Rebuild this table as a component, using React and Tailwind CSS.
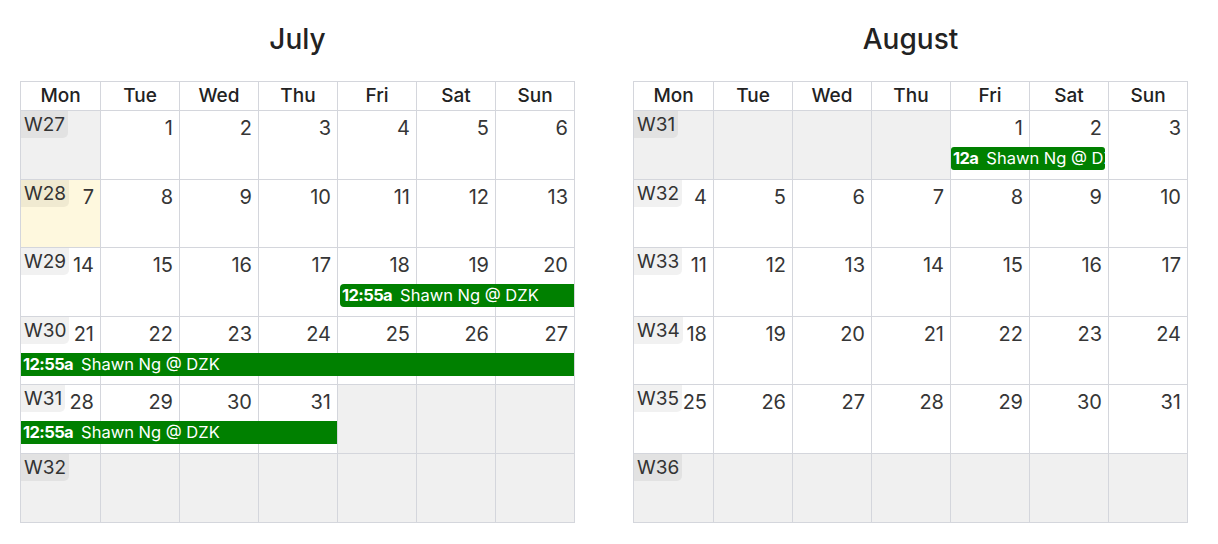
import React from "react";

const DAYS = ["Mon", "Tue", "Wed", "Thu", "Fri", "Sat", "Sun"];

const july = {
  title: "July",
  weeks: [
    { w: "W27", days: [null, 1, 2, 3, 4, 5, 6] },
    { w: "W28", days: [7, 8, 9, 10, 11, 12, 13], today: 0 },
    { w: "W29", days: [14, 15, 16, 17, 18, 19, 20], event: { start: 5, span: 3, time: "12:55a", cls: "rounded-l-[4px] ml-[3px]" } },
    { w: "W30", days: [21, 22, 23, 24, 25, 26, 27], event: { start: 1, span: 7, time: "12:55a", cls: "" } },
    { w: "W31", days: [28, 29, 30, 31, null, null, null], event: { start: 1, span: 4, time: "12:55a", cls: "" } },
    { w: "W32", days: [null, null, null, null, null, null, null] },
  ],
};

const august = {
  title: "August",
  weeks: [
    { w: "W31", days: [null, null, null, null, 1, 2, 3], event: { start: 5, span: 2, time: "12a", cls: "rounded-[3px] ml-[1px] mr-[3px]" } },
    { w: "W32", days: [4, 5, 6, 7, 8, 9, 10] },
    { w: "W33", days: [11, 12, 13, 14, 15, 16, 17] },
    { w: "W34", days: [18, 19, 20, 21, 22, 23, 24] },
    { w: "W35", days: [25, 26, 27, 28, 29, 30, 31] },
    { w: "W36", days: [null, null, null, null, null, null, null] },
  ],
};

const startClass = ["", "col-start-1", "col-start-2", "col-start-3", "col-start-4", "col-start-5", "col-start-6", "col-start-7"];
const spanClass = ["", "col-span-1", "col-span-2", "col-span-3", "col-span-4", "col-span-5", "col-span-6", "col-span-7"];

function Event({ ev }) {
  return (
    <div
      className={`${startClass[ev.start]} ${spanClass[ev.span]} ${ev.cls} h-[23px] bg-[#008000] text-white text-[16.5px] leading-[23px] whitespace-nowrap overflow-hidden flex items-center px-[2px]`}
    >
      <span className="font-bold tracking-[-0.6px]">{ev.time}</span>
      <span className="ml-[8px]">Shawn Ng @ DZK</span>
    </div>
  );
}

function Week({ week, last }) {
  return (
    <div className={`relative h-[68.5px] ${last ? "" : "border-b border-[#d4d6dc]"}`}>
      <div className="grid grid-cols-7 h-full">
        {week.days.map((d, i) => (
          <div
            key={i}
            className={`relative h-full ${i > 0 ? "border-l border-[#d4d6dc]" : ""} ${
              d === null ? "bg-[#f0f0f0]" : week.today === i ? "bg-[#fef8de]" : "bg-white"
            }`}
          >
            {i === 0 && (
              <div className="absolute left-0 top-0 h-[27px] px-[3px] rounded-br-[5px] bg-black/[0.055] text-[19px] leading-[27px] text-[#333]">
                {week.w}
              </div>
            )}
            {d !== null && (
              <div className="text-right pr-[6px] pt-[3px] text-[20px] leading-[28px] text-[#363636]">{d}</div>
            )}
          </div>
        ))}
      </div>
      {week.event && (
        <div className="absolute left-0 right-0 top-[36px] grid grid-cols-7">
          <Event ev={week.event} />
        </div>
      )}
    </div>
  );
}

function Month({ m }) {
  return (
    <div className="w-[555px]">
      <div className="h-[81px] flex items-center justify-center pb-[4px] text-[28px] font-medium text-[#222]">{m.title}</div>
      <div className="border border-[#d4d6dc]">
        <div className="grid grid-cols-7 h-[29px] border-b border-[#d4d6dc]">
          {DAYS.map((d, i) => (
            <div
              key={d}
              className={`flex items-center justify-center text-[19px] font-medium text-[#222] ${i > 0 ? "border-l border-[#d4d6dc]" : ""}`}
            >
              {d}
            </div>
          ))}
        </div>
        {m.weeks.map((w, i) => (
          <Week key={i} week={w} last={i === m.weeks.length - 1} />
        ))}
      </div>
    </div>
  );
}

export default function App() {
  return (
    <div className="w-[1218px] h-[544px] bg-white flex pl-[20px] gap-[58px]" style={{ fontFamily: "Inter, 'Noto Sans', sans-serif" }}>
      <Month m={july} />
      <Month m={august} />
    </div>
  );
}
